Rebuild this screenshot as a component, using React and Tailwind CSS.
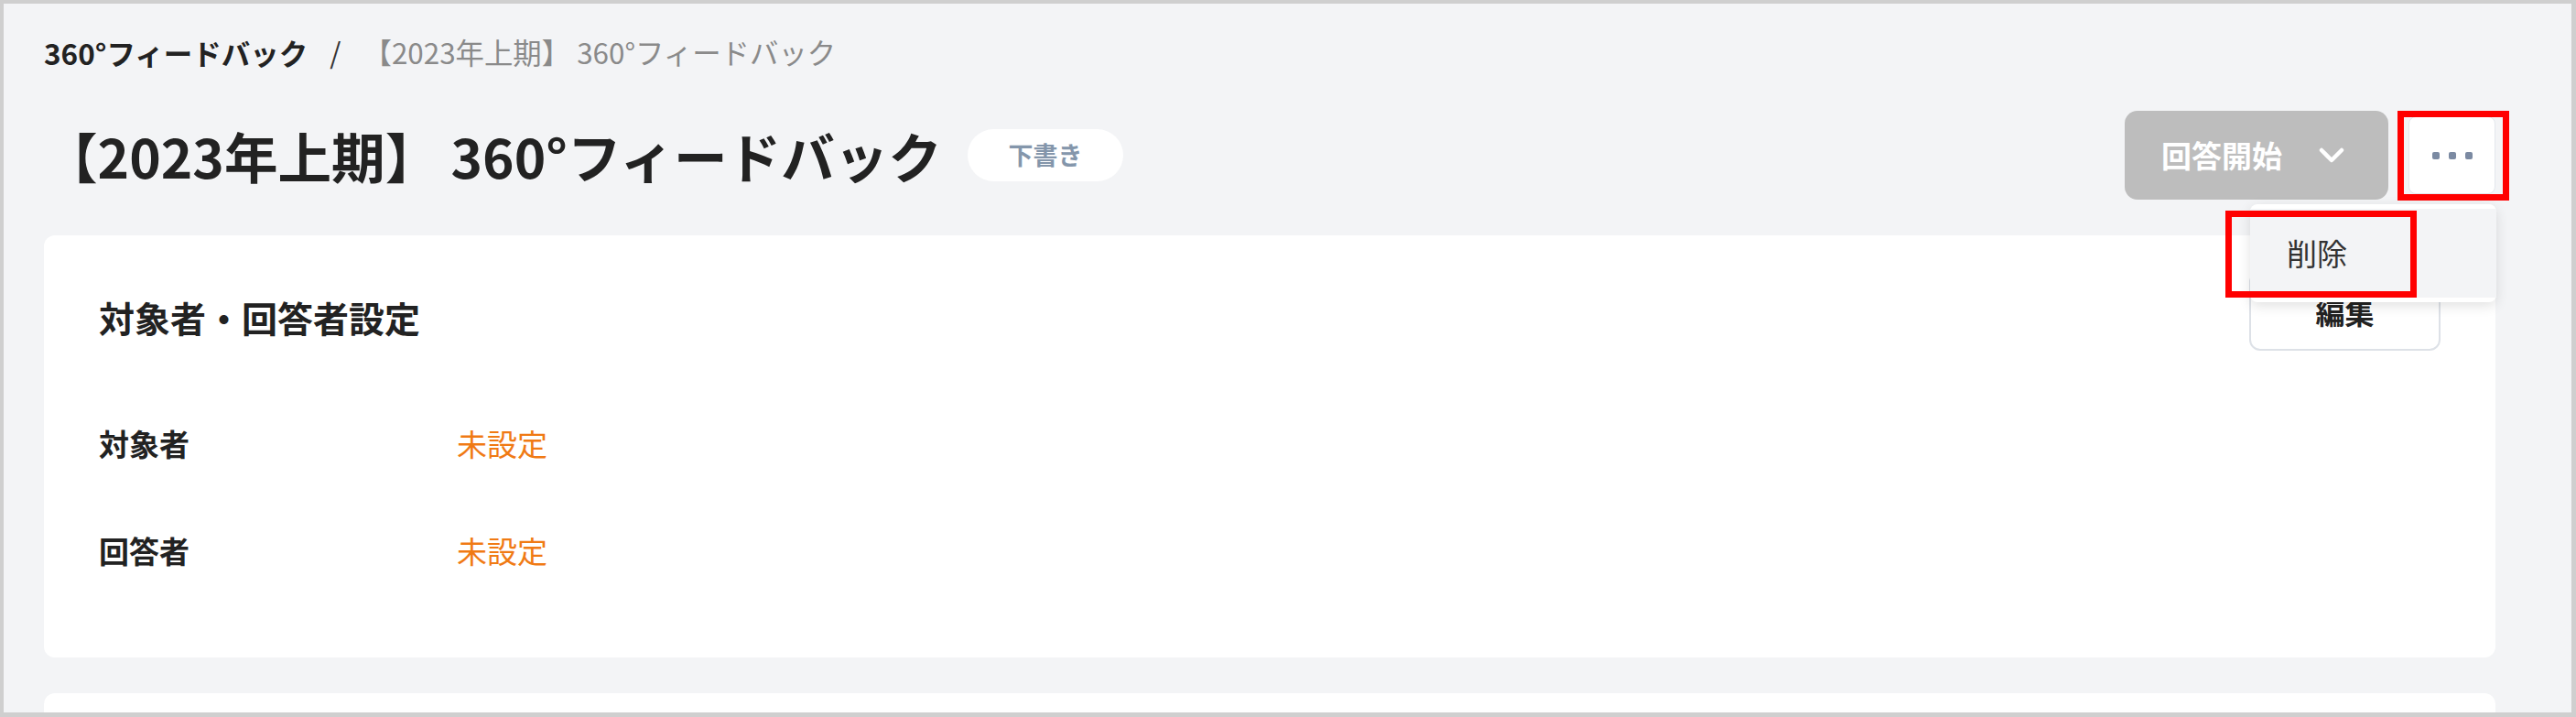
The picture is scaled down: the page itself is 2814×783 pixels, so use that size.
import React from 'react'

const font = { fontFamily: '"Noto Sans CJK JP", "Noto Sans", sans-serif' }

const MoreDots = () => (
  <div className="flex items-center gap-[10px]">
    <span className="block h-[8px] w-[8px] rounded-[2px] bg-[#7b8aa2]" />
    <span className="block h-[8px] w-[8px] rounded-[2px] bg-[#7b8aa2]" />
    <span className="block h-[8px] w-[8px] rounded-[2px] bg-[#7b8aa2]" />
  </div>
)

const Chevron = () => (
  <svg width="28" height="18" viewBox="0 0 28 18" fill="none">
    <polyline points="3,3 14,14 25,3" stroke="#ffffff" strokeWidth="4.5" strokeLinecap="round" strokeLinejoin="round" />
  </svg>
)

const Row = ({ label, value }) => (
  <div className="flex h-[48px] items-center">
    <div className="w-[391px] text-[33px] font-bold text-[#222222]">{label}</div>
    <div className="text-[33px] text-[#f07a14]">{value}</div>
  </div>
)

export default function App() {
  return (
    <div
      className="relative h-[783px] w-[2814px] overflow-hidden border-4 border-r-[5px] border-b-[5px] border-[#cfcfcf] bg-[#f3f4f6] pl-[44px] pr-[83px]"
      style={font}
    >
      {/* breadcrumb */}
      <div className="mt-[33px] flex h-[40px] items-center leading-[40px]">
        <span className="text-[31.5px] font-bold text-[#222222]">360°フィードバック</span>
        <span className="mx-[24px] text-[31px] text-[#333333]">/</span>
        <span className="text-[31.4px] text-[#8a8a8a]">【2023年上期】 360°フィードバック</span>
      </div>

      {/* title row */}
      <div className="mt-[44px] flex h-[97px] items-center justify-between">
        <div className="flex items-center">
          <h1 className="text-[58.6px] font-bold leading-[80px] text-[#222222]">【2023年上期】 360°フィードバック</h1>
          <span className="ml-[28px] flex h-[57px] w-[170px] items-center justify-center rounded-full bg-white text-[27px] font-bold text-[#8496ab]">
            下書き
          </span>
        </div>
        <div className="relative flex items-center gap-[22px]">
          <button className="flex h-[97px] w-[288px] items-center rounded-[14px] bg-[#bdbdbd] pl-[40px] text-[33px] font-bold text-white">
            回答開始
            <span className="ml-[40px]"><Chevron /></span>
          </button>
          <button className="flex h-[85px] w-[95px] items-center justify-center rounded-[8px] border border-[#e3e7ec] bg-white">
            <MoreDots />
          </button>

          {/* dropdown */}
          <div className="absolute right-[-1px] top-[102px] z-10 w-[269px] rounded-[8px] bg-white py-[5px] shadow-[0_4px_14px_rgba(0,0,0,0.12)]">
            <div className="flex h-[97px] items-center bg-[#f3f4f6] pl-[40px] text-[33px] text-[#333333]">削除</div>
          </div>

          {/* annotations */}
          <div className="pointer-events-none absolute left-[298px] top-[0px] z-20 h-[98px] w-[122px] border-[7px] border-[#ff0000]" />
          <div className="pointer-events-none absolute left-[110px] top-[109px] z-20 h-[95px] w-[209px] border-[7px] border-[#ff0000]" />
        </div>
      </div>

      {/* settings card */}
      <div className="mt-[39px] h-[461px] rounded-[12px] bg-white px-[60px] pt-[39px]">
        <div className="flex items-start justify-between">
          <h2 className="mt-[23px] text-[39px] font-bold leading-[54px] text-[#222222]">対象者・回答者設定</h2>
          <button className="flex h-[87px] w-[209px] items-center justify-center rounded-[12px] border-2 border-[#dde1e7] bg-white text-[32px] font-bold text-[#222222]">
            編集
          </button>
        </div>
        <div className="mt-[78px] flex flex-col gap-[69px]">
          <Row label="対象者" value="未設定" />
          <Row label="回答者" value="未設定" />
        </div>
      </div>

      {/* next card */}
      <div className="mt-[39px] h-[200px] rounded-[12px] bg-white" />
    </div>
  )
}
